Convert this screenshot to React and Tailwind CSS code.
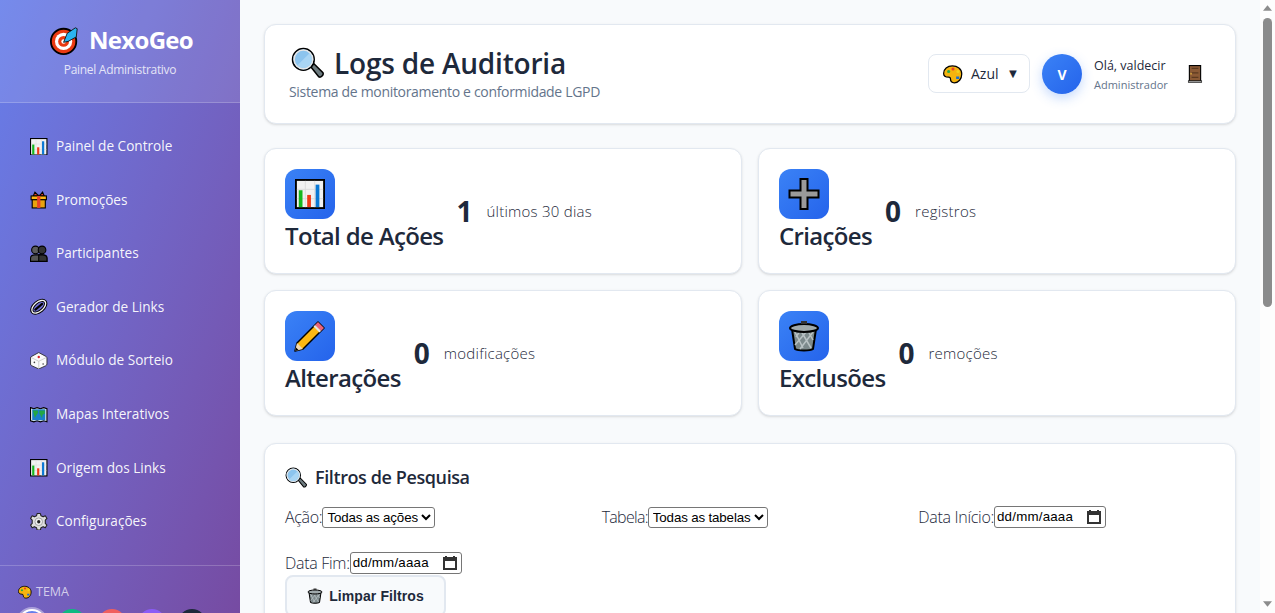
import React from "react";

const Chart = ({ className }) => (
  <svg viewBox="0 0 32 32" className={className}>
    <rect x="1" y="1" width="30" height="30" fill="#f2f2f2" stroke="#000" strokeWidth="2" />
    <path d="M2 11h28M2 21h28M11 2v28M21 2v28" stroke="#dcdcdc" strokeWidth="1" />
    <rect x="4" y="12" width="4" height="18" fill="#16b81f" />
    <rect x="13" y="17" width="4" height="13" fill="#f03a17" />
    <rect x="22" y="6" width="4" height="24" fill="#0a78d4" />
  </svg>
);

const Gift = ({ className }) => (
  <svg viewBox="0 0 32 32" className={className}>
    <path d="M9 2l6 6 3 0 5-6 3 7H6z" fill="#e8432a" stroke="#000" strokeWidth="2" />
    <rect x="2" y="9" width="28" height="7" fill="#fcb813" stroke="#000" strokeWidth="2" />
    <rect x="4" y="16" width="24" height="15" fill="#e9a30f" stroke="#000" strokeWidth="2" />
    <rect x="13" y="9" width="6" height="22" fill="#e8432a" />
  </svg>
);

const People = ({ className }) => (
  <svg viewBox="0 0 32 32" className={className}>
    <path d="M1 30v-6c0-4 4-6 8-6h14c4 0 8 2 8 6v6z" fill="#555" stroke="#000" strokeWidth="2" />
    <path d="M16 30V18h7c4 0 8 2 8 6v6z" fill="#333" stroke="#000" strokeWidth="2" />
    <circle cx="10" cy="9" r="7" fill="#5c5c5c" stroke="#000" strokeWidth="2" />
    <circle cx="22" cy="9" r="7" fill="#333" stroke="#000" strokeWidth="2" />
  </svg>
);

const LinkIcon = ({ className }) => (
  <svg viewBox="0 0 32 32" className={className}>
    <g transform="rotate(-40 16 16)" fill="none">
      <ellipse cx="16" cy="16" rx="15" ry="8.500" stroke="#000" strokeWidth="6" />
      <ellipse cx="16" cy="16" rx="15" ry="8.500" stroke="#f2f2f2" strokeWidth="2.500" />
      <path d="M8 16h16" stroke="#000" strokeWidth="4" strokeLinecap="round" />
    </g>
  </svg>
);

const Die = ({ className }) => (
  <svg viewBox="0 0 32 32" className={className}>
    <path d="M16 1l13 7q2 1 2 3v11q0 2-2 3l-13 6-13-6q-2-1-2-3V11q0-2 2-3z" fill="#fafafa" stroke="#222" strokeWidth="1.500" />
    <path d="M2 10l14 7 14-7M16 17v13" fill="none" stroke="#c4c4c4" strokeWidth="1.500" />
    <circle cx="16" cy="9" r="2.200" fill="#d8232a" />
    <circle cx="8" cy="19" r="1.500" fill="#444" />
    <circle cx="24" cy="22" r="1.500" fill="#444" />
  </svg>
);

const MapIcon = ({ className }) => (
  <svg viewBox="0 0 32 32" className={className}>
    <path d="M1 3l6 2 6-2 6 2 6-2 6 2v24l-6-2-6 2-6-2-6 2-6-2z" fill="#eef6f8" stroke="#000" strokeWidth="2" />
    <rect x="4" y="6" width="24" height="20" fill="#1b7fc9" />
    <path d="M5 8h9l1 4-4 6-2 4-2-7zM17 8h10v6l-4 2-1 6-3-5-2-4z" fill="#22a744" />
  </svg>
);

const Gear = ({ className }) => (
  <svg viewBox="0 0 32 32" className={className}>
    <path d="M13 1h6l1 4 4 2 4-2 3 5-3 3v6l3 3-3 5-4-2-4 2-1 4h-6l-1-4-4-2-4 2-3-5 3-3v-6l-3-3 3-5 4 2 4-2z" fill="#dedede" stroke="#222" strokeWidth="2" strokeLinejoin="round" />
    <circle cx="16" cy="16" r="7" fill="#eee" stroke="#999" strokeWidth="1.500" />
    <circle cx="16" cy="16" r="3" fill="#222" />
  </svg>
);

const Target = ({ className }) => (
  <svg viewBox="0 0 32 32" className={className}>
    <circle cx="15" cy="17" r="14" fill="#ea3a12" stroke="#000" strokeWidth="2" />
    <circle cx="15" cy="17" r="9.500" fill="#fff" />
    <circle cx="15" cy="17" r="6" fill="#ea3a12" />
    <circle cx="15" cy="17" r="2.500" fill="#fff" />
    <path d="M15 18L19 8l9-6 2 1-1 9-9 5z" fill="#2bb4f0" stroke="#111" strokeWidth="1" />
  </svg>
);

const Magnifier = ({ className }) => (
  <svg viewBox="0 0 32 32" className={className}>
    <path d="M19 19l3-3 9 9c1 2-2 5-4 4z" fill="#6d7b7f" stroke="#000" strokeWidth="1.500" />
    <circle cx="12" cy="12" r="10.500" fill="#8cc4ee" stroke="#000" strokeWidth="1.500" />
    <circle cx="12" cy="12" r="9" fill="none" stroke="#e6e6e6" strokeWidth="1.500" />
    <path d="M6 18L18 6a9 9 0 0 1 0 12 9 9 0 0 1-12 0z" fill="#a9d5f4" />
  </svg>
);

const Palette = ({ className }) => (
  <svg viewBox="0 0 32 32" className={className}>
    <path d="M15 3C7 3 1 8 1 15c0 5 5 6 8 6 2 0 3 1 3 3s1 6 6 6c7 0 12-6 12-14S23 3 15 3z" fill="#f5b40f" stroke="#000" strokeWidth="2" />
    <circle cx="9" cy="12" r="2.500" fill="#2aa84a" />
    <circle cx="16" cy="8" r="2.500" fill="#e8432a" />
    <circle cx="24" cy="12" r="2.500" fill="#f0d020" />
    <rect x="21" y="20" width="5" height="4" fill="#1a6fd0" />
  </svg>
);

const Door = ({ className }) => (
  <svg viewBox="0 0 24 32" className={className}>
    <rect x="2" y="1" width="20" height="28" fill="#8b5a35" stroke="#000" strokeWidth="2" />
    <path d="M6 6h12M6 14h12M6 22h12" stroke="#5c3a20" strokeWidth="2" />
    <rect x="4" y="14" width="2" height="3" fill="#f0c040" />
    <rect x="0" y="28" width="24" height="3" fill="#999" stroke="#000" strokeWidth="1" />
  </svg>
);

const Plus = ({ className }) => (
  <svg viewBox="0 0 32 32" className={className}>
    <path d="M12.500 1h7v11.500h11v7h-11V31h-7V19.500h-11v-7h11z" fill="#9a9a9a" stroke="#000" strokeWidth="2" />
  </svg>
);

const Pencil = ({ className }) => (
  <svg viewBox="0 0 32 32" className={className}>
    <path d="M1 31l2-8L24 2l6 6L9 29z" fill="#fcb813" stroke="#000" strokeWidth="1.500" strokeLinejoin="round" />
    <path d="M24 2l6 6-3 3-6-6z" fill="#e8637a" />
    <path d="M21 5l6 6-1.500 1.500-6-6z" fill="#e5e5e5" />
    <path d="M1 31l2-8 6 6z" fill="#f0d9b5" />
    <path d="M1 31l1-3.500 2.500 2.500z" fill="#000" />
  </svg>
);

const Trash = ({ className }) => (
  <svg viewBox="0 0 32 32" className={className}>
    <path d="M4 9l3 20c3 2 15 2 18 0l3-20z" fill="#7d8a8c" stroke="#000" strokeWidth="2" />
    <path d="M7 12l8 16M13 11l10 17M20 11l5 9M25 12L12 29M19 11L7 25M12 11l-4 6" stroke="#b9c2c4" strokeWidth="1.500" />
    <ellipse cx="16" cy="8" rx="14" ry="4" fill="#9fa9ab" stroke="#000" strokeWidth="2" />
    <rect x="13" y="1" width="6" height="3" fill="#333" />
  </svg>
);

const Calendar = () => (
  <svg viewBox="0 0 14 14" className="size-[14px] shrink-0">
    <path d="M3 0v2M11 0v2" stroke="#333" strokeWidth="2" />
    <rect x="1" y="2" width="12" height="11" fill="none" stroke="#333" strokeWidth="2" />
    <rect x="1" y="2" width="12" height="3" fill="#333" />
  </svg>
);

const navItems = [
  { label: "Painel de Controle", Icon: Chart },
  { label: "Promoções", Icon: Gift },
  { label: "Participantes", Icon: People },
  { label: "Gerador de Links", Icon: LinkIcon },
  { label: "Módulo de Sorteio", Icon: Die },
  { label: "Mapas Interativos", Icon: MapIcon },
  { label: "Origem dos Links", Icon: Chart },
  { label: "Configurações", Icon: Gear },
];

const stats = [
  { title: "Total de Ações", value: "1", note: "últimos 30 dias", Icon: Chart, size: "size-[30px]" },
  { title: "Criações", value: "0", note: "registros", Icon: Plus, size: "size-[32px]" },
  { title: "Alterações", value: "0", note: "modificações", Icon: Pencil, size: "size-[32px]" },
  { title: "Exclusões", value: "0", note: "remoções", Icon: Trash, size: "size-[32px]" },
];

const fieldClass =
  "border border-[#767676] rounded-[3px] bg-white text-black font-['Liberation_Sans',sans-serif] text-[13.33px]";

function DateField() {
  return (
    <span className={`${fieldClass} h-[22px] w-[112px] pl-[2px] pr-[4px] flex items-center`}>
      <input readOnly defaultValue="dd/mm/aaaa" className="w-full min-w-0 outline-none tracking-[0.2px]" />
      <Calendar />
    </span>
  );
}

function StatCard({ title, value, note, Icon, size }) {
  return (
    <div className="h-[126px] bg-white border border-[#e2e8f0] rounded-xl shadow-sm px-5 flex items-center gap-[13px]">
      <div className="pt-[1px] pb-[2px]">
        <div className="size-[50px] rounded-xl bg-gradient-to-br from-[#3b82f6] to-[#2563eb] flex items-center justify-center">
          <Icon className={size} />
        </div>
        <div className="text-[24px] leading-[33px] tracking-[-0.65px] font-semibold text-[#1e293b]">{title}</div>
      </div>
      <div className="text-[28px] font-bold text-[#1e293b]">{value}</div>
      <div className="ml-[1px] text-[15px] tracking-[0.25px] font-light text-[#1e293b]">{note}</div>
    </div>
  );
}

export default function App() {
  return (
    <div className="h-screen flex overflow-hidden font-['Open_Sans',sans-serif] bg-[#f8fafc]">
      <aside className="w-[240px] shrink-0 h-full overflow-hidden text-white bg-gradient-to-br from-[#667eea] to-[#764ba2]">
        <div className="h-[103px] bg-white/10 border-b border-white/20 pt-[24px] text-center">
          <div className="pl-[3px] flex items-center justify-center gap-[10px]">
            <Target className="size-[29px]" />
            <span className="text-[24px] leading-[32px] font-bold tracking-[-0.7px]">NexoGeo</span>
          </div>
          <div className="mt-[5px] text-[12px] tracking-[-0.3px] opacity-80">Painel Administrativo</div>
        </div>
        <nav className="pt-[16.500px] h-[461.500px]">
          {navItems.map(({ label, Icon }) => (
            <div key={label} className="h-[53.6px] pl-[30px] flex items-center gap-[8.500px] text-[13.6px] font-medium text-white/95">
              <Icon className="size-[17.500px]" />
              {label}
            </div>
          ))}
        </nav>
        <div className="border-t border-white/20 pt-[17.500px] pl-[18px]">
          <div className="flex items-center gap-[4px] text-[12.500px] text-white/70">
            <Palette className="size-[14px]" />
            TEMA
          </div>
          <div className="mt-[7px] flex gap-[12px]">
            <div className="size-[28px] rounded-full bg-[#667eea] border-2 border-white ring-2 ring-white/40" />
            <div className="size-[28px] rounded-full bg-[#10b981]" />
            <div className="size-[28px] rounded-full bg-[#f05f5f]" />
            <div className="size-[28px] rounded-full bg-[#8b5cf6]" />
            <div className="size-[28px] rounded-full bg-[#1e293b]" />
          </div>
        </div>
      </aside>

      <main className="flex-1 h-full overflow-y-auto [scrollbar-width:none]">
        <div className="min-h-[1224px] p-6">
          <header className="h-[100px] bg-white border border-[#e2e8f0] rounded-xl shadow-sm pl-[24px] pr-[31px] flex items-center justify-between">
            <div className="pb-[1px]">
              <h1 className="flex items-center gap-[10px] pl-[2px] text-[28px] leading-[35px] tracking-[-0.2px] font-semibold text-[#1e293b]">
                <Magnifier className="size-[33px]" />
                Logs de Auditoria
              </h1>
              <p className="mt-[1px] text-[14px] leading-[20px] tracking-[-0.32px] font-medium text-[#64748b]">Sistema de monitoramento e conformidade LGPD</p>
            </div>
            <div className="flex items-center">
              <div className="mb-[1px] w-[102px] h-[39px] border border-[#e2e8f0] rounded-lg flex items-center pl-[14px] text-[14px] text-[#1e293b]">
                <Palette className="size-[20px] mr-[8px]" />
                Azul
                <span className="ml-[8px] text-[13px]">▼</span>
              </div>
              <div className="ml-[12px] size-[40px] rounded-full bg-gradient-to-br from-[#3b82f6] to-[#2563eb] shadow-[0_4px_12px_rgba(59,130,246,0.3)] flex items-center justify-center text-white font-bold text-[14px]">
                V
              </div>
              <div className="ml-[12px] w-[92px] pt-[2px]">
                <div className="text-[12.500px] leading-[18px] text-[#1e293b]">Olá, valdecir</div>
                <div className="mt-[2px] text-[11px] leading-[16px] text-[#64748b]">Administrador</div>
              </div>
              <Door className="size-[18px]" />
            </div>
          </header>

          <section className="mt-6 grid grid-cols-2 gap-4">
            {stats.map((stat) => (
              <StatCard key={stat.title} {...stat} />
            ))}
          </section>

          <section className="mt-[27px] bg-white border border-[#e2e8f0] rounded-xl shadow-sm p-5">
            <h2 className="flex items-center gap-[8px] text-[18px] leading-[27px] tracking-[-0.4px] font-semibold text-[#1e293b]">
              <Magnifier className="size-[22px]" />
              Filtros de Pesquisa
            </h2>
            <div className="mt-[13px] grid grid-cols-3 gap-5 text-[16px] tracking-[-0.3px] font-light text-[#1e293b]">
              <label className="h-[26px] flex items-center">
                Ação:
                <select className={`${fieldClass} tracking-[-0.15px] h-[21px]`}>
                  <option>Todas as ações</option>
                </select>
              </label>
              <label className="h-[26px] flex items-center">
                <span className="tracking-[-0.7px]">Tabela:</span>
                <select className={`${fieldClass} tracking-[-0.15px] h-[21px]`}>
                  <option>Todas as tabelas</option>
                </select>
              </label>
              <label className="h-[26px] flex items-center">
                Data Início:
                <DateField />
              </label>
              <div>
                <label className="h-[25px] flex items-center">
                  Data Fim:
                  <DateField />
                </label>
                <button className="w-[161px] h-[42px] border-2 border-[#e2e8f0] rounded-lg bg-[#f8fafc] flex items-center justify-center gap-[6px] font-['Liberation_Sans',sans-serif] text-[14px] tracking-[0.1px] font-bold text-[#1e293b]">
                  <Trash className="size-[16px]" />
                  Limpar Filtros
                </button>
              </div>
            </div>
          </section>
        </div>
      </main>

      {/* page scrollbar as in the screenshot */}
      <div className="w-[15px] shrink-0 h-full bg-[#fdfdfd] pt-[5px] pb-[6px] pl-[3px] flex flex-col">
        <svg viewBox="0 0 10 6" className="w-[9px] h-[6px]">
          <path d="M5 0l5 6H0z" fill="#8c8c8c" />
        </svg>
        <div className="mt-[7px] w-[9px] h-[289px] rounded-full bg-[#8c8c8c]" />
        <svg viewBox="0 0 10 6" className="mt-auto w-[9px] h-[6px]">
          <path d="M5 6l5-6H0z" fill="#8c8c8c" />
        </svg>
      </div>
    </div>
  );
}
